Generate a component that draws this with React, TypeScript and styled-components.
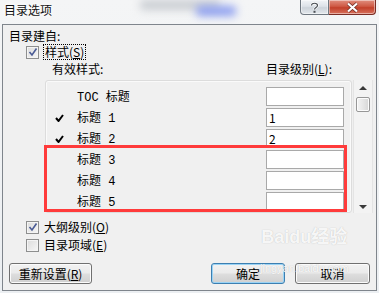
import React from 'react';
import styled, { createGlobalStyle } from 'styled-components';

const Global = createGlobalStyle`
  html, body { margin: 0; padding: 0; background: #eef1f4; }
  body { font-family: "Noto Sans CJK SC", "Liberation Sans", sans-serif; font-size: 12px; color: #000; }
  #root { width: 379px; height: 293px; }
`;

const Window = styled.div`
  position: relative;
  width: 379px;
  height: 293px;
  display: flex;
  flex-direction: column;
  background: linear-gradient(180deg, #f4f5f6 0%, #eceff2 100%);
  overflow: hidden;
`;

const TitleBar = styled.div`
  position: relative;
  height: 24px;
  flex: none;
  display: flex;
  align-items: flex-start;
  justify-content: space-between;
  padding: 0 3px 0 4px;
`;

const Blur = styled.div<{ $c: string; $l: number; $t: number; $w: number; $h: number }>`
  position: absolute;
  left: ${p => p.$l}px;
  top: ${p => p.$t}px;
  width: ${p => p.$w}px;
  height: ${p => p.$h}px;
  background: ${p => p.$c};
  filter: blur(4px);
  border-radius: 4px;
`;

const Title = styled.div`
  position: relative;
  margin-top: 2px;
  font-size: 12px;
  line-height: 16px;
  color: #111;
  text-shadow: 0 0 3px #fff, 0 0 6px #fff, 0 0 8px #fff;
`;

const CaptionButtons = styled.div`
  position: relative;
  display: flex;
`;

const CapButton = styled.div<{ $close?: boolean }>`
  width: ${p => (p.$close ? '47px' : '29px')};
  height: 15px;
  display: flex;
  align-items: center;
  justify-content: center;
  box-sizing: border-box;
  border: 1px solid ${p => (p.$close ? '#7a2c24' : '#6f7780')};
  border-top: none;
  border-left-width: ${p => (p.$close ? '0' : '1px')};
  border-radius: ${p => (p.$close ? '0 0 4px 0' : '0 0 0 4px')};
  background: ${p =>
    p.$close
      ? 'linear-gradient(180deg, #e08f7f 0%, #cf5a45 45%, #c2402a 55%, #d8725e 100%)'
      : 'linear-gradient(180deg, #f2f4f7 0%, #dde2e8 45%, #cdd3da 55%, #e3e7ec 100%)'};
  box-shadow: inset 0 0 0 1px rgba(255, 255, 255, 0.45);
`;

const Body = styled.div`
  position: relative;
  flex: 1;
  margin: 0 2px 2px 2px;
  border: 1px solid #7f858c;
  background: #f0f0f0;
  display: flex;
  flex-direction: column;
  padding: 4px 6px 0 6px;
`;

const Label = styled.div`
  height: 14px;
  line-height: 14px;
  white-space: nowrap;
`;

const CheckRow = styled.div<{ $mt: number }>`
  margin-top: ${p => p.$mt}px;
  margin-left: 17px;
  height: 14px;
  display: flex;
  align-items: center;
  gap: 5px;
  line-height: 14px;
  white-space: nowrap;
`;

const Box = styled.div`
  width: 13px;
  height: 13px;
  box-sizing: border-box;
  border: 1px solid #8e8f8f;
  background: linear-gradient(135deg, #dcdcdc 0%, #f6f6f6 100%);
  box-shadow: inset 0 0 0 1px #f4f4f4;
  display: flex;
  align-items: center;
  justify-content: center;
`;

const Focus = styled.span`
  outline: 1px dotted #000;
  outline-offset: 0;
  padding: 0 1px;
`;

const U = styled.span`
  text-decoration: underline;
`;

const HeaderRow = styled.div`
  margin-top: 3px;
  height: 14px;
  line-height: 14px;
  display: flex;
  white-space: nowrap;
`;

const HeaderCell = styled.div<{ $w?: number; $pl: number }>`
  box-sizing: border-box;
  padding-left: ${p => p.$pl}px;
  width: ${p => (p.$w ? `${p.$w}px` : 'auto')};
`;

const ListArea = styled.div`
  margin-top: 4px;
  margin-left: 36px;
  width: 328px;
  height: 133px;
  display: flex;
  gap: 1px;
`;

const ListBox = styled.div`
  flex: 1;
  box-sizing: border-box;
  border: 1px solid #dcdcdc;
  border-radius: 3px;
  box-shadow: inset 0 0 0 1px #fafafa;
  padding-top: 6px;
  display: flex;
  flex-direction: column;
  gap: 2px;
`;

const Row = styled.div`
  height: 19px;
  display: flex;
  align-items: center;
`;

const CheckCol = styled.div`
  width: 31px;
  padding-left: 9px;
  box-sizing: border-box;
  display: flex;
  align-items: center;
`;

const RowText = styled.div`
  width: 189px;
  white-space: nowrap;
  line-height: 14px;
`;

const Half = styled.span`
  font-family: "Liberation Mono", monospace;
  font-size: 12px;
`;

const LevelInput = styled.div`
  width: 78px;
  height: 19px;
  box-sizing: border-box;
  border: 1px solid #a9a9a9;
  background: #fff;
  padding-left: 2px;
  line-height: 17px;
  font-size: 12px;
`;

const ScrollBar = styled.div`
  width: 20px;
  box-sizing: border-box;
  border-left: 1px solid #e4e4e4;
  border-right: 1px solid #e4e4e4;
  background: #f3f3f3;
  display: flex;
  flex-direction: column;
  align-items: center;
`;

const Arrow = styled.div<{ $down?: boolean }>`
  width: 0;
  height: 0;
  border-left: 4px solid transparent;
  border-right: 4px solid transparent;
  ${p => (p.$down ? 'border-top: 4px solid #3a3a3a;' : 'border-bottom: 4px solid #3a3a3a;')}
  margin-top: ${p => (p.$down ? 'auto' : '6px')};
  margin-bottom: ${p => (p.$down ? '4px' : '0')};
`;

const Thumb = styled.div`
  margin-top: 7px;
  width: 14px;
  height: 15px;
  box-sizing: border-box;
  border: 1px solid #979797;
  border-radius: 2px;
  background: linear-gradient(90deg, #f4f4f4 0%, #e6e6e6 50%, #d6d6d6 100%);
  box-shadow: inset 0 0 0 1px #fcfcfc;
`;

const Footer = styled.div`
  margin-top: 11px;
  display: flex;
  align-items: center;
`;

const Button = styled.div<{ $w: number; $default?: boolean }>`
  width: ${p => p.$w}px;
  height: 21px;
  box-sizing: border-box;
  border: 1px solid ${p => (p.$default ? '#3c7fb1' : '#707070')};
  border-radius: 3px;
  background: linear-gradient(180deg, #f2f2f2 0%, #ebebeb 45%, #dddddd 55%, #cfcfcf 100%);
  box-shadow: inset 0 0 0 1px ${p => (p.$default ? '#9ad3f5' : '#fbfbfb')};
  display: flex;
  align-items: center;
  justify-content: center;
  line-height: 14px;
  white-space: nowrap;
`;

const Spacer = styled.div`
  flex: 1;
`;

const Gap = styled.div`
  width: 10px;
`;

const RedFrame = styled.div`
  position: absolute;
  left: 44px;
  top: 145px;
  width: 303px;
  height: 67px;
  box-sizing: border-box;
  border: 3px solid #ff3b3b;
  pointer-events: none;
`;

const Watermark = styled.div`
  position: absolute;
  left: 260px;
  top: 226px;
  color: rgba(255, 255, 255, 0.9);
  text-shadow: 0 0 1px rgba(140, 140, 140, 0.55);
  pointer-events: none;
  display: flex;
  flex-direction: column;
  align-items: center;
  white-space: nowrap;
`;

const WmBig = styled.div`
  font-family: "Liberation Sans", "Noto Sans CJK SC", sans-serif;
  font-weight: bold;
  font-size: 18px;
  line-height: 22px;
`;

const WmSmall = styled.div`
  font-family: "Liberation Sans", sans-serif;
  font-size: 11px;
  line-height: 12px;
  margin-top: 14px;
`;

const Tick = () => (
  <svg width="9" height="8" viewBox="0 0 9 8">
    <path d="M1 4 L3.5 7 L8 1" fill="none" stroke="#000" strokeWidth="2" />
  </svg>
);

const BoxCheck = () => (
  <svg width="10" height="10" viewBox="0 0 10 10">
    <path d="M1.5 5 L4 8 L8.5 1.5" fill="none" stroke="#4a5b95" strokeWidth="1.6" />
  </svg>
);

const rows: { name: React.ReactNode; checked: boolean; level: string }[] = [
  { name: <><Half>TOC </Half>标题</>, checked: false, level: '' },
  { name: <>标题<Half> 1</Half></>, checked: true, level: '1' },
  { name: <>标题<Half> 2</Half></>, checked: true, level: '2' },
  { name: <>标题<Half> 3</Half></>, checked: false, level: '' },
  { name: <>标题<Half> 4</Half></>, checked: false, level: '' },
  { name: <>标题<Half> 5</Half></>, checked: false, level: '' },
];

export default function App() {
  return (
    <>
      <Global />
      <Window>
        <TitleBar>
          <Blur $c="#c9cdd2" $l={140} $t={0} $w={80} $h={10} />
          <Blur $c="#8c9ef0" $l={196} $t={6} $w={40} $h={10} />
          <Title>目录选项</Title>
          <CaptionButtons>
            <CapButton>
              <svg width="9" height="11" viewBox="0 0 9 11">
                <path d="M1.5 3.5 C1.5 0.5 7.5 0.5 7.5 3.5 C7.5 5.5 4.5 5.5 4.5 7.5" fill="none" stroke="#fff" strokeWidth="2.6" />
                <path d="M1.5 3.5 C1.5 0.5 7.5 0.5 7.5 3.5 C7.5 5.5 4.5 5.5 4.5 7.5" fill="none" stroke="#4a4f55" strokeWidth="1.2" />
                <rect x="3.5" y="8.8" width="2" height="2" fill="#4a4f55" />
              </svg>
            </CapButton>
            <CapButton $close>
              <svg width="13" height="11" viewBox="0 0 13 11">
                <path d="M2 1.5 L11 9.5 M11 1.5 L2 9.5" stroke="#6b2a22" strokeWidth="3.6" />
                <path d="M2 1.5 L11 9.5 M11 1.5 L2 9.5" stroke="#fff" strokeWidth="2.2" />
              </svg>
            </CapButton>
          </CaptionButtons>
        </TitleBar>
        <Body>
          <Label>目录建自:</Label>
          <CheckRow $mt={2}>
            <Box><BoxCheck /></Box>
            <Focus>样式(<U>S</U>)</Focus>
          </CheckRow>
          <HeaderRow>
            <HeaderCell $pl={43} $w={257}>有效样式:</HeaderCell>
            <HeaderCell $pl={0}>目录级别(<U>L</U>):</HeaderCell>
          </HeaderRow>
          <ListArea>
            <ListBox>
              {rows.map((r, i) => (
                <Row key={i}>
                  <CheckCol>{r.checked && <Tick />}</CheckCol>
                  <RowText>{r.name}</RowText>
                  <LevelInput>{r.level}</LevelInput>
                </Row>
              ))}
            </ListBox>
            <ScrollBar>
              <Arrow />
              <Thumb />
              <Arrow $down />
            </ScrollBar>
          </ListArea>
          <CheckRow $mt={7}>
            <Box><BoxCheck /></Box>
            <span>大纲级别(<U>O</U>)</span>
          </CheckRow>
          <CheckRow $mt={4}>
            <Box />
            <span>目录项域(<U>E</U>)</span>
          </CheckRow>
          <Footer>
            <Button $w={83}>重新设置(<U>R</U>)</Button>
            <Spacer />
            <Button $w={74} $default>确定</Button>
            <Gap />
            <Button $w={75}>取消</Button>
          </Footer>
        </Body>
        <RedFrame />
        <Watermark>
          <WmBig>Baidu经验</WmBig>
          <WmSmall>jingyan.baidu.com</WmSmall>
        </Watermark>
      </Window>
    </>
  );
}
